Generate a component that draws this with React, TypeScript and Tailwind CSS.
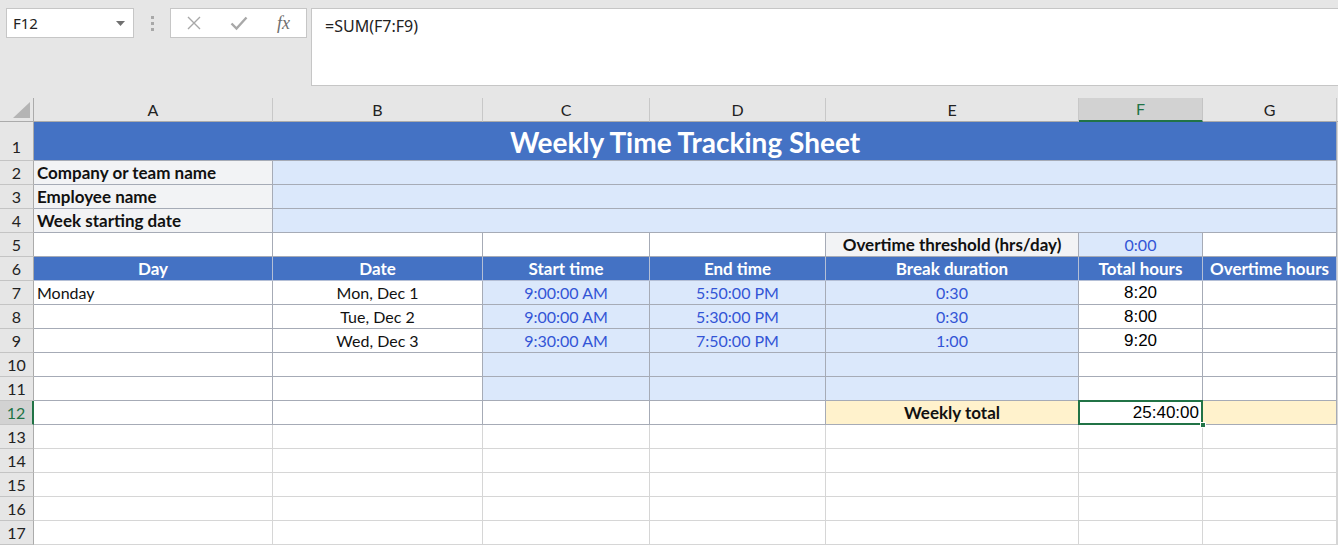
import React from 'react';

type CellProps = {
    className?: string;
    children?: React.ReactNode;
};

// table cells inside the formatted block get the darker bluish border,
// the empty sheet below gets the normal light gridlines
const TB = 'border-r border-b border-[#a6abb6]';
const GL = 'border-r border-b border-[#d6d6d6]';

function Cell({ className = '', children }: CellProps) {
    return <div className={`flex items-center overflow-hidden whitespace-nowrap ${className}`}>{children}</div>;
}

function RowHead({ n, active = false }: { n: number; active?: boolean }) {
    if (active) {
        return (
            <div className="flex items-center justify-center bg-[#d2d2d2] text-[#217346] border-r-2 border-r-[#217346] border-b border-b-[#c4c4c4] text-[16px]">
                {n}
            </div>
        );
    }
    return (
        <div className={`flex justify-center bg-[#e6e6e6] text-[#222] border-r border-r-[#ababab] border-b border-b-[#c4c4c4] text-[16px] ${n === 1 ? 'items-end pb-[1px]' : 'items-center'}`}>
            {n}
        </div>
    );
}

function ColHead({ label, active = false }: { label: string; active?: boolean }) {
    if (active) {
        return (
            <div className="flex items-center justify-center bg-[#d2d2d2] text-[#217346] border-b-2 border-b-[#217346] border-r border-r-[#c4c4c4] text-[16px]">
                {label}
            </div>
        );
    }
    return (
        <div className="flex items-center justify-center bg-[#e6e6e6] text-[#222] border-b border-b-[#ababab] border-r border-r-[#c8c8c8] text-[16px]">
            {label}
        </div>
    );
}

const blueText = 'text-[#3355d6]';

export default function App() {
    const emptyRows = [13, 14, 15, 16, 17];

    return (
        <div className="w-[1338px] h-[545px] overflow-hidden bg-white" style={{ fontFamily: 'Lato, "Noto Sans", sans-serif' }}>
            {/* formula bar */}
            <div className="h-[98px] bg-[#e6e6e6] flex items-start pt-[8px]" style={{ fontFamily: '"Noto Sans", "Open Sans", sans-serif' }}>
                <div className="ml-[6px] w-[128px] h-[30px] bg-white border border-[#c6c6c6] flex items-center justify-between pl-[6px] pr-[8px] text-[15px] text-[#222]">
                    <span>F12</span>
                    <svg width="9" height="5" viewBox="0 0 9 5"><path d="M0 0h9L4.5 5z" fill="#707070" /></svg>
                </div>
                <div className="w-[36px] h-[30px] flex flex-col items-center justify-center gap-[3px]">
                    <div className="w-[3px] h-[3px] bg-[#a8a8a8]" />
                    <div className="w-[3px] h-[3px] bg-[#a8a8a8]" />
                    <div className="w-[3px] h-[3px] bg-[#a8a8a8]" />
                </div>
                <div className="w-[137px] h-[30px] bg-white border border-[#c6c6c6] flex items-center">
                    <div className="w-[45px] flex justify-center">
                        <svg width="16" height="16" viewBox="0 0 16 16">
                            <path d="M2 2l12 12M14 2L2 14" stroke="#a8a8a8" strokeWidth="1.4" fill="none" />
                        </svg>
                    </div>
                    <div className="w-[45px] flex justify-center">
                        <svg width="18" height="16" viewBox="0 0 18 16">
                            <path d="M1.5 8.5l5 5L16.5 2.5" stroke="#a8a8a8" strokeWidth="2.4" fill="none" />
                        </svg>
                    </div>
                    <div className="w-[45px] flex justify-center text-[18px] italic text-[#6e6e6e]" style={{ fontFamily: '"Liberation Serif", serif' }}>
                        fx
                    </div>
                </div>
                <div className="ml-[4px] flex-1 h-[78px] bg-white border border-r-0 border-[#c6c6c6] pl-[13px] pt-[5px] text-[16px] text-[#222]">
                    =SUM(F7:F9)
                </div>
            </div>

            {/* sheet */}
            <div className="grid grid-cols-[34px_239px_210px_167px_176px_253px_124px_134px_1fr] grid-rows-[24px_39px_repeat(16,24px)] text-[16px] text-[#111]">
                {/* column headers */}
                <div className="bg-[#e6e6e6] border-r border-r-[#ababab] border-b border-b-[#ababab] flex items-end justify-end pr-[3px] pb-[3px]">
                    <svg width="17" height="16" viewBox="0 0 17 16"><path d="M17 0v16H0z" fill="#b4b4b4" /></svg>
                </div>
                <ColHead label="A" />
                <ColHead label="B" />
                <ColHead label="C" />
                <ColHead label="D" />
                <ColHead label="E" />
                <ColHead label="F" active />
                <ColHead label="G" />
                <div className="bg-[#e6e6e6] border-b border-b-[#ababab]" />

                {/* row 1 */}
                <RowHead n={1} />
                <Cell className={`col-span-7 justify-center bg-[#4472c4] text-white font-bold text-[28px] pt-[1px] ${TB}`}>
                    Weekly Time Tracking Sheet
                </Cell>
                <Cell className={GL} />

                {/* rows 2-4 */}
                {['Company or team name', 'Employee name', 'Week starting date'].map((label, i) => (
                    <React.Fragment key={label}>
                        <RowHead n={i + 2} />
                        <Cell className={`bg-[#f2f3f5] font-bold text-[17px] pl-[3px] ${TB}`}>{label}</Cell>
                        <Cell className={`col-span-6 bg-[#dbe8fb] ${TB}`} />
                        <Cell className={GL} />
                    </React.Fragment>
                ))}

                {/* row 5 */}
                <RowHead n={5} />
                <Cell className={TB} />
                <Cell className={TB} />
                <Cell className={TB} />
                <Cell className={TB} />
                <Cell className={`justify-center bg-[#f2f3f5] font-bold text-[17px] ${TB}`}>Overtime threshold (hrs/day)</Cell>
                <Cell className={`justify-center bg-[#dbe8fb] ${blueText} ${TB}`}>0:00</Cell>
                <Cell className={TB} />
                <Cell className={GL} />

                {/* row 6 */}
                <RowHead n={6} />
                {['Day', 'Date', 'Start time', 'End time', 'Break duration', 'Total hours', 'Overtime hours'].map((h) => (
                    <Cell key={h} className={`justify-center bg-[#4472c4] text-white font-bold text-[17px] border-r border-b border-[#b4bfd6]`}>
                        {h}
                    </Cell>
                ))}
                <Cell className={GL} />

                {/* rows 7-11 */}
                {[
                    { day: 'Monday', date: 'Mon, Dec 1', start: '9:00:00 AM', end: '5:50:00 PM', brk: '0:30', total: '8:20' },
                    { day: '', date: 'Tue, Dec 2', start: '9:00:00 AM', end: '5:30:00 PM', brk: '0:30', total: '8:00' },
                    { day: '', date: 'Wed, Dec 3', start: '9:30:00 AM', end: '7:50:00 PM', brk: '1:00', total: '9:20' },
                    { day: '', date: '', start: '', end: '', brk: '', total: '' },
                    { day: '', date: '', start: '', end: '', brk: '', total: '' },
                ].map((r, i) => (
                    <React.Fragment key={i}>
                        <RowHead n={i + 7} />
                        <Cell className={`pl-[3px] ${TB}`}>{r.day}</Cell>
                        <Cell className={`justify-center ${TB}`}>{r.date}</Cell>
                        <Cell className={`justify-center bg-[#dbe8fb] ${blueText} ${TB}`}>{r.start}</Cell>
                        <Cell className={`justify-center bg-[#dbe8fb] ${blueText} ${TB}`}>{r.end}</Cell>
                        <Cell className={`justify-center bg-[#dbe8fb] ${blueText} ${TB}`}>{r.brk}</Cell>
                        <Cell className={`justify-center text-black text-[17px] ${TB}`}>
                            <span style={{ fontFamily: '"Liberation Sans", Arial, sans-serif' }}>{r.total}</span>
                        </Cell>
                        <Cell className={TB} />
                        <Cell className={GL} />
                    </React.Fragment>
                ))}

                {/* row 12 */}
                <RowHead n={12} active />
                <Cell className={TB} />
                <Cell className={TB} />
                <Cell className={TB} />
                <Cell className={TB} />
                <Cell className={`justify-center bg-[#fff2cc] font-bold text-[17px] ${TB}`}>Weekly total</Cell>
                <div className={`relative ${TB}`}>
                    <div className="absolute -left-[1px] -top-[1px] -right-[1px] -bottom-[1px] border-2 border-[#217346] flex items-center justify-end pr-[2px] text-[17px] text-black">
                        <span style={{ fontFamily: '"Liberation Sans", Arial, sans-serif' }}>25:40:00</span>
                    </div>
                    <div className="absolute -right-[4px] -bottom-[4px] w-[6px] h-[6px] bg-[#217346] border border-white" />
                </div>
                <Cell className={`bg-[#fff2cc] ${TB}`} />
                <Cell className={GL} />

                {/* rows 13-17 */}
                {emptyRows.map((n) => (
                    <React.Fragment key={n}>
                        <RowHead n={n} />
                        <Cell className={GL} />
                        <Cell className={GL} />
                        <Cell className={GL} />
                        <Cell className={GL} />
                        <Cell className={GL} />
                        <Cell className={GL} />
                        <Cell className={GL} />
                        <Cell className={GL} />
                    </React.Fragment>
                ))}
            </div>
        </div>
    );
}
